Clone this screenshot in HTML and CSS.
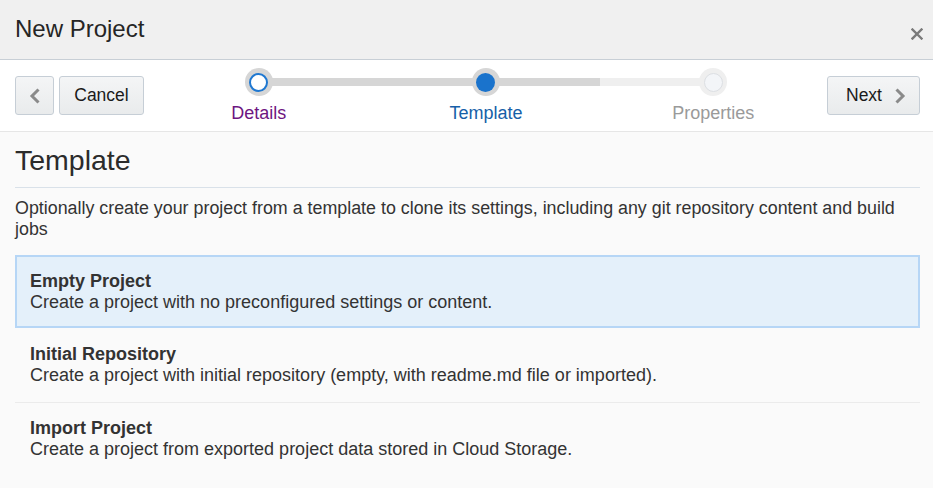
FILE: index.html
```html
<!DOCTYPE html>
<html>
<head>
<meta charset="utf-8">
<title>New Project</title>
<link rel="stylesheet" href="styles.css">
</head>
<body>
<div class="dialog">
  <header class="dlg-header">
    <h1 class="dlg-title">New Project</h1>
    <button class="close" aria-label="Close">
      <svg width="12" height="12" viewBox="0 0 12 12"><path d="M1.5 1.5 L10.5 10.5 M10.5 1.5 L1.5 10.5" stroke="#7a7a7a" stroke-width="2.4" stroke-linecap="square" fill="none"/></svg>
    </button>
  </header>
  <div class="toolbar">
    <button class="btn btn-icon" aria-label="Back">
      <svg width="12" height="16" viewBox="0 0 12 16"><path d="M9.5 1.5 L3 8 L9.5 14.5" stroke="#8a8a8a" stroke-width="3" fill="none"/></svg>
    </button>
    <button class="btn btn-text">Cancel</button>
    <div class="train">
      <div class="step step-first done">
        <span class="ring"><span class="dot"></span></span>
        <span class="label">Details</span>
      </div>
      <div class="step current">
        <span class="ring"><span class="dot"></span></span>
        <span class="label">Template</span>
      </div>
      <div class="step step-last todo">
        <span class="ring"><span class="dot"></span></span>
        <span class="label">Properties</span>
      </div>
    </div>
    <button class="btn btn-next">Next
      <svg width="12" height="16" viewBox="0 0 12 16"><path d="M2.5 1.5 L9 8 L2.5 14.5" stroke="#8a8a8a" stroke-width="3" fill="none"/></svg>
    </button>
  </div>
  <main class="content">
    <h2 class="section-title">Template</h2>
    <p class="intro">Optionally create your project from a template to clone its settings, including any git repository content and build jobs</p>
    <ul class="options">
      <li class="option selected">
        <div class="opt-title">Empty Project</div>
        <div class="opt-desc">Create a project with no preconfigured settings or content.</div>
      </li>
      <li class="option">
        <div class="opt-title">Initial Repository</div>
        <div class="opt-desc">Create a project with initial repository (empty, with readme.md file or imported).</div>
      </li>
      <li class="option sep">
        <div class="opt-title">Import Project</div>
        <div class="opt-desc">Create a project from exported project data stored in Cloud Storage.</div>
      </li>
    </ul>
  </main>
</div>
</body>
</html>
```

FILE: styles.css
```css
* { box-sizing: border-box; }
html, body { margin: 0; padding: 0; }
body {
  font-family: "Liberation Sans", Arial, sans-serif;
  color: #333;
  background: #fafafa;
  width: 933px;
  height: 488px;
  overflow: hidden;
}
.dlg-header {
  height: 60px;
  background: #f0f0f0;
  border-bottom: 1px solid #c8cfd6;
  display: flex;
  align-items: center;
  justify-content: space-between;
  padding: 0 9px 0 15px;
}
.dlg-title {
  margin: 0;
  font-size: 24px;
  font-weight: normal;
  color: #252525;
  line-height: 28px;
  padding-bottom: 2px;
}
.close {
  border: 0;
  background: none;
  padding: 0;
  margin-top: 8px;
  width: 14px;
  height: 14px;
  display: flex;
  align-items: center;
  justify-content: center;
}
.toolbar {
  height: 72px;
  background: #fff;
  border-bottom: 1px solid #e6e6e6;
  display: flex;
  align-items: flex-start;
  padding: 8px 13px 0 15px;
}
.btn {
  margin-top: 8px;
  height: 39px;
  border: 1px solid #c6ced6;
  border-radius: 3px;
  background: linear-gradient(#f4f5f6, #e9ebec);
  font-family: "Liberation Sans", Arial, sans-serif;
  font-size: 17.5px;
  color: #1a1a1a;
  display: flex;
  align-items: center;
  justify-content: center;
  padding: 0;
}
.btn-icon { width: 39px; }
.btn-text { width: 85px; margin-left: 5px; }
.btn-next { width: 93px; gap: 12px; padding-left: 5px; }
.train {
  flex: 1;
  display: grid;
  grid-template-columns: 1fr 1fr 1fr;
  padding-left: 1px;
}
.step {
  position: relative;
  display: flex;
  flex-direction: column;
  align-items: center;
}
.step::before, .step::after {
  content: "";
  position: absolute;
  top: 10px;
  height: 8px;
  width: 50%;
  background: #d6d6d6;
}
.step::before { left: 0; }
.step::after { right: 0; }
.step-first::before, .step-last::after { display: none; }
.current::after { background: #d6d6d6; }
.todo::before { background: #efefef; }
.ring {
  position: relative;
  z-index: 1;
  width: 28px;
  height: 28px;
  border-radius: 50%;
  background: #d6d6d6;
  display: flex;
  align-items: center;
  justify-content: center;
}
.dot {
  width: 19px;
  height: 19px;
  border-radius: 50%;
}
.done .dot { background: #fff; border: 2px solid #1f78d1; }
.current .dot { background: #1a73cc; }
.todo .ring { background: #efefef; }
.todo .dot { background: #f3f5f8; border: 1px solid #dcdfe3; }
.label {
  margin-top: 6px;
  font-size: 18px;
  line-height: 22px;
}
.done .label { color: #6e1581; }
.current .label { color: #1660a8; }
.todo .label { color: #9a9a9a; }
.content { padding: 0 13px 0 15px; }
.section-title {
  margin: 0;
  font-size: 28.5px;
  font-weight: normal;
  line-height: 32px;
  padding: 12px 0 11px;
  color: #2b2b2b;
  border-bottom: 1px solid #d9e1e9;
}
.intro {
  margin: 10px 0 0;
  font-size: 17.85px;
  line-height: 21px;
  color: #333;
}
.options {
  list-style: none;
  margin: 15px 0 0;
  padding: 0;
}
.option {
  padding: 15px 15px 16px;
  border-top: 1px solid transparent;
  font-size: 18px;
  line-height: 21px;
}
.option.sep { border-top-color: #ebebeb; }
.option.selected {
  background: #e4f0fa;
  border: 2px solid #b6d6f6;
  padding: 14px 13px 13px;
}
.opt-title { font-weight: bold; color: #333; }
.opt-desc { color: #333; }
```
